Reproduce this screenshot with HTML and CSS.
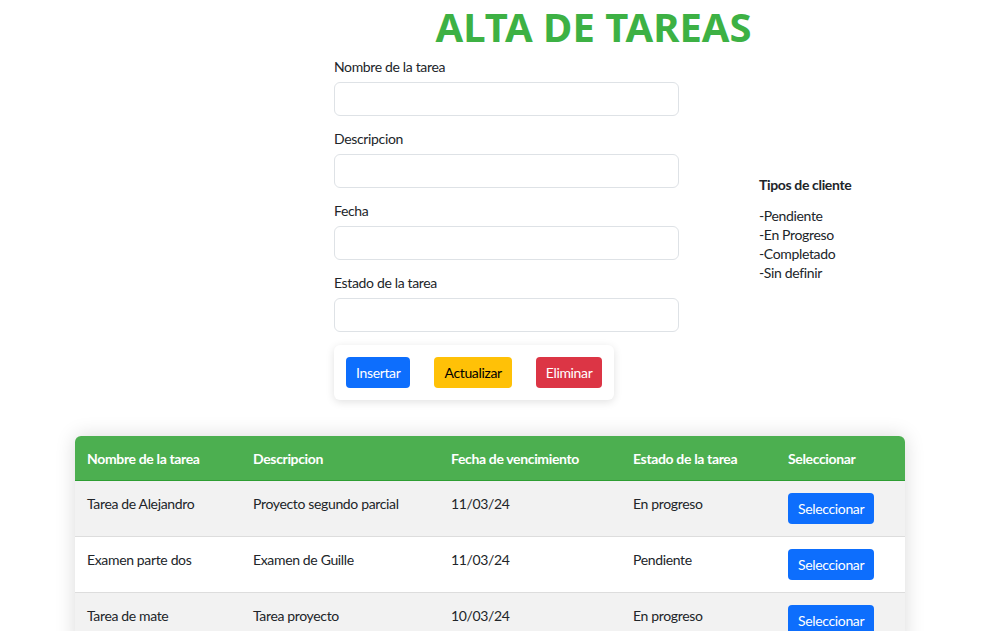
FILE: index.html
```html
<!DOCTYPE html>
<html lang="es">
<head>
<meta charset="utf-8">
<title>Alta de tareas</title>
<link rel="stylesheet" href="styles.css">
</head>
<body>
<div class="top">
  <h1 class="title">ALTA DE TAREAS</h1>
  <div class="row">
    <form class="form">
      <div class="group">
        <label class="label">Nombre de la tarea</label>
        <input class="input" type="text">
      </div>
      <div class="group">
        <label class="label">Descripcion</label>
        <input class="input" type="text">
      </div>
      <div class="group">
        <label class="label">Fecha</label>
        <input class="input" type="text">
      </div>
      <div class="group">
        <label class="label">Estado de la tarea</label>
        <input class="input" type="text">
      </div>
      <div class="actions">
        <button type="button" class="btn btn-blue">Insertar</button>
        <button type="button" class="btn btn-yellow">Actualizar</button>
        <button type="button" class="btn btn-red">Eliminar</button>
      </div>
    </form>
    <div class="side">
      <div class="side-title">Tipos de cliente</div>
      <div class="side-list">
        <div>-Pendiente</div>
        <div>-En Progreso</div>
        <div>-Completado</div>
        <div>-Sin definir</div>
      </div>
    </div>
  </div>
</div>
<div class="table-wrap">
  <table class="table">
    <thead>
      <tr>
        <th class="c1">Nombre de la tarea</th>
        <th class="c2">Descripcion</th>
        <th class="c3">Fecha de vencimiento</th>
        <th class="c4">Estado de la tarea</th>
        <th class="c5">Seleccionar</th>
      </tr>
    </thead>
    <tbody>
      <tr class="odd">
        <td>Tarea de Alejandro</td>
        <td>Proyecto segundo parcial</td>
        <td>11/03/24</td>
        <td>En progreso</td>
        <td><button type="button" class="btn btn-blue">Seleccionar</button></td>
      </tr>
      <tr>
        <td>Examen parte dos</td>
        <td>Examen de Guille</td>
        <td>11/03/24</td>
        <td>Pendiente</td>
        <td><button type="button" class="btn btn-blue">Seleccionar</button></td>
      </tr>
      <tr class="odd">
        <td>Tarea de mate</td>
        <td>Tarea proyecto</td>
        <td>10/03/24</td>
        <td>En progreso</td>
        <td><button type="button" class="btn btn-blue">Seleccionar</button></td>
      </tr>
    </tbody>
  </table>
</div>
</body>
</html>
```
FILE: styles.css
```css
* { box-sizing: border-box; }
body {
  margin: 0;
  background: #fff;
  color: #212529;
  font-family: Lato, "Noto Sans", sans-serif;
  font-size: 14px;
  line-height: 21px;
  letter-spacing: -0.35px;
}
.top {
  width: 519px;
  margin-left: 334px;
}
.title {
  margin: 0 0 4px;
  padding-top: 2px;
  text-align: center;
  font-family: "Noto Sans", sans-serif;
  font-size: 40px;
  line-height: 50px;
  font-weight: 700;
  letter-spacing: 0;
  color: #3db144;
}
.row {
  display: flex;
  align-items: center;
  gap: 80px;
}
.form {
  width: 345px;
  flex-shrink: 0;
  margin: 0;
}
.group {
  display: flex;
  flex-direction: column;
  gap: 5px;
  margin-bottom: 12px;
}
.label {
  display: block;
}
.input {
  height: 34px;
  border: 1px solid #dee2e6;
  border-radius: 6px;
  background: #fff;
  font: inherit;
  padding: 4px 10px;
}
.actions {
  display: inline-flex;
  gap: 24px;
  padding: 12px;
  margin-top: 1px;
  background: #fff;
  border-radius: 6px;
  box-shadow: 0 2px 8px rgba(0, 0, 0, 0.12);
}
.btn {
  font: inherit;
  font-size: 14px;
  line-height: 21px;
  letter-spacing: inherit;
  padding: 4px 9px;
  border: 1px solid transparent;
  border-radius: 4px;
  cursor: pointer;
}
.btn-blue { background: #0d6efd; color: #fff; }
.btn-yellow { background: #ffc107; color: #000; }
.btn-red { background: #dc3545; color: #fff; }
.side {
  white-space: nowrap;
}
.side-title {
  font-weight: 700;
  margin-bottom: 11px;
}
.side-list {
  line-height: 19px;
}
.table-wrap {
  margin: 36px 0 0 75px;
  width: 830px;
}
.table {
  width: 830px;
  border-collapse: separate;
  border-spacing: 0;
  box-shadow: 0 0 20px rgba(0, 0, 0, 0.15);
  border-radius: 6px 6px 0 0;
}
.table th {
  background: #4caf50;
  color: #fff;
  font-weight: 700;
  text-align: left;
  padding: 12px 12px 11px;
  border-bottom: 1px solid #2e9e33;
}
.table th.c1 { border-top-left-radius: 6px; width: 166px; }
.table th.c2 { width: 198px; }
.table th.c3 { width: 182px; }
.table th.c4 { width: 155px; }
.table th.c5 { border-top-right-radius: 6px; width: 129px; }
.table td {
  padding: 12px;
  vertical-align: top;
  border-bottom: 1px solid #dddddd;
  background: #fff;
}
.table tr.odd td { background: #f2f2f2; }
.table td .btn {
  padding: 4px 9px;
}
```
